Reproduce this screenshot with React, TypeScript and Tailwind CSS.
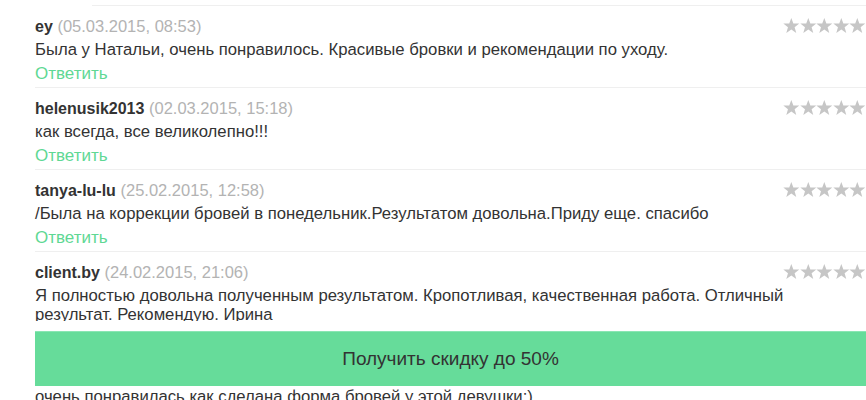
import React from "react";

type Review = { name: string; date: string; text: string };

const reviews: Review[] = [
  { name: "ey", date: "(05.03.2015, 08:53)", text: "Была у Натальи, очень понравилось. Красивые бровки и рекомендации по уходу." },
  { name: "helenusik2013", date: "(02.03.2015, 15:18)", text: "как всегда, все великолепно!!!" },
  { name: "tanya-lu-lu", date: "(25.02.2015, 12:58)", text: "/Была на коррекции бровей в понедельник.Результатом довольна.Приду еще. спасибо" },
  { name: "client.by", date: "(24.02.2015, 21:06)", text: "Я полностью довольна полученным результатом. Кропотливая, качественная работа. Отличный результат. Рекомендую. Ирина" },
  { name: "anna", date: "(20.02.2015, 10:12)", text: "очень понравилась как сделана форма бровей у этой девушки:)" },
];

function Star() {
  return (
    <svg width="16.6" height="17" viewBox="0 0 24 24" className="shrink-0">
      <polygon
        points="12,1 15,9 23.5,9.2 16.8,14.4 19.2,22.8 12,17.9 4.8,22.8 7.2,14.4 0.5,9.2 9,9"
        fill="#c6c6c6"
      />
    </svg>
  );
}

function Row({ r }: { r: Review }) {
  return (
    <div className="relative border-b border-[#efefef] pt-[8px] pb-[1px]">
      <div className="absolute right-[0px] top-[11px] flex">
        <Star />
        <Star />
        <Star />
        <Star />
        <Star />
      </div>
      <div className="h-[24px] text-[16.5px] leading-[24px] whitespace-nowrap">
        <span className="font-bold text-[16px] text-[#333]">{r.name}</span>{" "}
        <span className="text-[#b3b3b3]">{r.date}</span>
      </div>
      <p className="text-[16.7px] leading-[19px] pt-[2px] pb-[3px] text-[#333] pr-[70px]">{r.text}</p>
      <div className="h-[24px] text-[17px] leading-[24px] text-[#5fd894]">Ответить</div>
    </div>
  );
}

export default function App() {
  return (
    <div
      className="relative w-[866px] h-[400px] overflow-hidden bg-white"
      style={{ fontFamily: '"Liberation Sans", Arial, sans-serif' }}
    >
      <div className="h-[5px]" />
      <div className="ml-[92px] h-px bg-[#efefef]" />
      <div className="ml-[35px]">
        {reviews.map((r) => (
          <Row key={r.name} r={r} />
        ))}
      </div>
      <div className="absolute left-0 right-0 bottom-[13px] bg-white pt-[10px] pb-[1px] pl-[35px]">
        <div className="h-[55px] bg-[#66dc9a] border-t border-[#8ae6b3] flex items-center justify-center text-[19px] text-[#333]">
          Получить скидку до 50%
        </div>
      </div>
    </div>
  );
}
